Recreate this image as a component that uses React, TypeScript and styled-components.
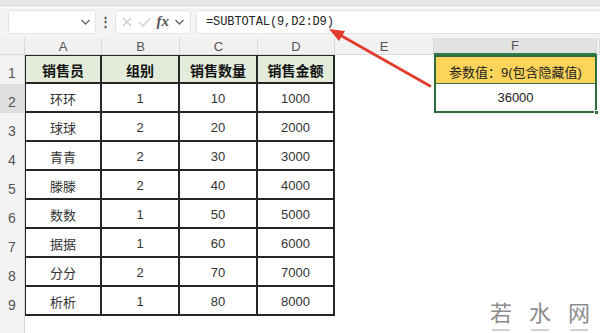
import React from "react";
import styled, { createGlobalStyle, css } from "styled-components";

const Global = createGlobalStyle`
  html, body { margin: 0; padding: 0; background: #ffffff; }
  body { font-family: "Liberation Sans", "Noto Sans CJK SC", sans-serif; }
  * { box-sizing: border-box; }
`;

const Page = styled.div`
  position: relative;
  width: 600px;
  height: 333px;
  overflow: hidden;
  display: flex;
  flex-direction: column;
  background: #fff;
`;

const TopStrip = styled.div`
  height: 6px;
  background: #e6e6e6;
  border-bottom: 1px solid #d9d9d9;
`;

const Toolbar = styled.div`
  height: 32px;
  background: #f4f4f4;
  display: flex;
  align-items: center;
  padding: 1px 0 2px 8px;
  gap: 0;
`;

const Box = styled.div<{ $w?: number; $grow?: boolean }>`
  height: 24px;
  background: #fff;
  border: 1px solid #e3e3e3;
  border-radius: 4px;
  display: flex;
  align-items: center;
  ${(p) => (p.$w ? `width: ${p.$w}px;` : "")}
  ${(p) => (p.$grow ? "flex: 1; border-right: none; border-radius: 4px 0 0 4px;" : "")}
`;

const NameBox = styled(Box)`
  justify-content: flex-end;
  padding-right: 4px;
`;

const Dots = styled.div`
  width: 19px;
  display: flex;
  justify-content: center;
  color: #555;
  font-size: 13px;
  font-weight: bold;
`;

const FuncBox = styled(Box)`
  justify-content: space-around;
  padding: 0 3px;
  margin-right: 5px;
`;

const FxText = styled.span`
  font-family: "Liberation Serif", serif;
  font-style: italic;
  font-weight: bold;
  font-size: 15px;
  color: #555;
`;

const Formula = styled.div`
  font-family: "Liberation Mono", monospace;
  font-size: 12px;
  color: #222;
  padding-left: 9px;
  letter-spacing: -0.1px;
`;

const Sheet = styled.div`
  display: grid;
  grid-template-columns: 25px 77px 78px 78px 77px 99px 163px 1fr;
  grid-template-rows: 17px repeat(9, 29px) 1fr;
  flex: 1;
`;

const ColHead = styled.div<{ $active?: boolean }>`
  background: ${(p) => (p.$active ? "#e2e2e2" : "#f1f1f1")};
  border-right: 1px solid #dadada;
  border-bottom: ${(p) => (p.$active ? "2px solid #2f7d4a" : "1px solid #dadada")};
  color: #555;
  font-size: 13px;
  display: flex;
  align-items: center;
  justify-content: center;
  line-height: 1;
`;

const Corner = styled(ColHead)`
  background: #f1f1f1;
`;

const RowHead = styled.div<{ $active?: boolean }>`
  background: ${(p) => (p.$active ? "#dedede" : "#f3f3f3")};
  border-right: 1px solid #d6d6d6;
  color: #555;
  font-size: 14px;
  display: flex;
  align-items: center;
  justify-content: center;
  padding-top: 7px;
`;

const Cell = styled.div<{ $head?: boolean; $first?: boolean; $col0?: boolean }>`
  display: flex;
  align-items: center;
  justify-content: center;
  border-right: 2px solid #262626;
  border-bottom: 2px solid #262626;
  ${(p) => (p.$col0 ? "border-left: 1px solid #262626;" : "")}
  ${(p) => (p.$first ? "border-top: 1px solid #262626;" : "")}
  background: ${(p) => (p.$head ? "#e3ecda" : "#ffffff")};
  color: ${(p) => (p.$head ? "#111" : "#333")};
  font-size: ${(p) => (p.$head ? "14px" : "13px")};
  font-weight: ${(p) => (p.$head ? "bold" : "normal")};
  padding-top: 2px;
`;

const Blank = styled.div``;

const FCell = styled.div<{ $yellow?: boolean }>`
  position: relative;
  display: flex;
  align-items: center;
  justify-content: center;
  font-size: 13px;
  color: #222;
  border-left: 2px solid #2e6b3d;
  border-right: 2px solid #2e6b3d;
  ${(p) =>
    p.$yellow
      ? css`
          background: #fdd45a;
          border-top: 2px solid #2e6b3d;
          border-bottom: 1px solid #3a6f47;
          padding-top: 2px;
        `
      : css`
          background: #fff;
          border-bottom: 2px solid #2e6b3d;
        `}
`;

const Handle = styled.span`
  position: absolute;
  right: -4px;
  bottom: -4px;
  width: 5px;
  height: 5px;
  background: #2e6b3d;
  border: 1px solid #fff;
`;

const Overlay = styled.svg`
  position: absolute;
  left: 0;
  top: 0;
  pointer-events: none;
`;

const Watermark = styled.div`
  position: absolute;
  left: 490px;
  top: 298px;
  display: flex;
  gap: 17px;
  color: #8d8d8d;
`;

const WmChar = styled.div`
  display: flex;
  flex-direction: column;
  align-items: center;
  font-family: "Noto Sans CJK SC", sans-serif;
  font-size: 22px;
  line-height: 26px;
`;

const Dash = styled.span`
  width: 18px;
  height: 2px;
  margin-top: 5px;
  background: #d2d2d2;
`;

const cols = ["A", "B", "C", "D", "E", "F"];
const header = ["销售员", "组别", "销售数量", "销售金额"];
const rows: [string, number, number, number][] = [
  ["环环", 1, 10, 1000],
  ["球球", 2, 20, 2000],
  ["青青", 2, 30, 3000],
  ["滕滕", 2, 40, 4000],
  ["数数", 1, 50, 5000],
  ["据据", 1, 60, 6000],
  ["分分", 2, 70, 7000],
  ["析析", 1, 80, 8000],
];

const Chevron = () => (
  <svg width="11" height="8" viewBox="0 0 11 8">
    <path d="M1.5 2 L5.5 6 L9.5 2" fill="none" stroke="#666" strokeWidth="1.4" />
  </svg>
);

export default function App() {
  return (
    <Page>
      <Global />
      <TopStrip />
      <Toolbar>
        <NameBox $w={88}>
          <Chevron />
        </NameBox>
        <Dots>⋮</Dots>
        <FuncBox $w={76}>
          <svg width="12" height="12" viewBox="0 0 12 12">
            <path d="M2 2 L10 10 M10 2 L2 10" stroke="#c9c9c9" strokeWidth="1.2" />
          </svg>
          <svg width="14" height="12" viewBox="0 0 14 12">
            <path d="M1.5 6.5 L5 10 L12.5 2" fill="none" stroke="#c9c9c9" strokeWidth="1.2" />
          </svg>
          <FxText>fx</FxText>
          <Chevron />
        </FuncBox>
        <Box $grow>
          <Formula>=SUBTOTAL(9,D2:D9)</Formula>
        </Box>
      </Toolbar>
      <Sheet>
        <Corner />
        {cols.map((c) => (
          <ColHead key={c} $active={c === "F"}>
            {c}
          </ColHead>
        ))}
        <ColHead />

        <RowHead>1</RowHead>
        {header.map((h, i) => (
          <Cell key={h} $head $first $col0={i === 0}>
            {h}
          </Cell>
        ))}
        <Blank />
        <FCell $yellow>参数值：9(包含隐藏值)</FCell>
        <Blank />

        {rows.map((r, ri) => (
          <React.Fragment key={ri}>
            <RowHead $active={ri === 0}>{ri + 2}</RowHead>
            {r.map((v, ci) => (
              <Cell key={ci} $col0={ci === 0}>
                {v}
              </Cell>
            ))}
            <Blank />
            {ri === 0 ? (
              <FCell>
                36000
                <Handle />
              </FCell>
            ) : (
              <Blank />
            )}
            <Blank />
          </React.Fragment>
        ))}

        <RowHead />
        <Blank />
      </Sheet>
      <Overlay width="600" height="333" viewBox="0 0 600 333">
        <line x1="430" y1="86" x2="340" y2="35" stroke="#e23b2b" strokeWidth="2.6" strokeLinecap="round" />
        <polygon points="329,29 345,31 339,41" fill="#e23b2b" />
      </Overlay>
      <Watermark>
        {["若", "水", "网"].map((ch) => (
          <WmChar key={ch}>
            {ch}
            <Dash />
          </WmChar>
        ))}
      </Watermark>
    </Page>
  );
}
